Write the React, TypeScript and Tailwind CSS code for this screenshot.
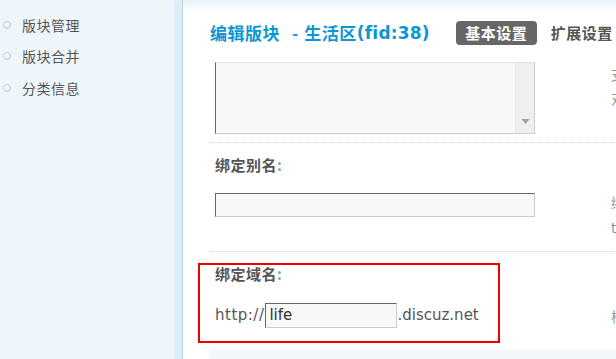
const menu = ["版块管理", "版块合并", "分类信息"];

const cjk = "font-['SimSun','Noto_Sans_CJK_SC',sans-serif]";

function Bullet() {
  return (
    <span className="h-[8px] w-[8px] shrink-0 rounded-full border border-[#c9c9c9] bg-[radial-gradient(circle_at_40%_35%,#ffffff,#e4e4e4)]" />
  );
}

export default function App() {
  return (
    <div className={`relative flex h-[359px] w-[616px] overflow-hidden bg-white ${cjk}`}>
      {/* sidebar */}
      <aside className="flex w-[174px] shrink-0 flex-col bg-[#eff6fb] pt-[9px]">
        {menu.map((item) => (
          <div key={item} className="flex h-[31.5px] items-center gap-[11px] pl-[3px]">
            <Bullet />
            <span className="text-[14px] leading-[16px] tracking-[0.5px] text-[#555]">{item}</span>
          </div>
        ))}
      </aside>
      <div className="w-[8px] shrink-0 bg-[#deedf7]" />
      <div className="w-[1px] shrink-0 bg-[#b3d2e4]" />

      {/* main */}
      <main className="flex flex-1 flex-col bg-[linear-gradient(to_bottom,#e9f2f9_0px,#ffffff_12px)] pl-[26px]">
        <div className="mt-[21px] flex h-[24px] shrink-0 items-center whitespace-nowrap">
          <h1 className="ml-[1px] flex items-center text-[17px] font-bold leading-[20px] text-[#0c96d3]">
            <span className="tracking-[0.5px]">编辑版块</span>
            <span className="ml-[12px] mr-[6px]">-</span>
            <span className="tracking-[0.5px]">生活区</span>
            <span className="font-['DejaVu_Sans',sans-serif] text-[17px] tracking-[0.2px]">(fid:38)</span>
          </h1>
          <span className="ml-[26px] flex h-[24px] w-[81px] shrink-0 items-center justify-center rounded-[4px] bg-[#666] text-[15px] font-bold tracking-[0.5px] text-white">
            基本设置
          </span>
          <span className="ml-[14px] text-[15px] font-bold tracking-[0.5px] text-[#555]">扩展设置</span>
        </div>

        {/* row: textarea */}
        <div className="mt-[17px] flex h-[81px] shrink-0 border-b border-dotted border-[#c6dbe8]">
          <div className="w-[402px] shrink-0 pl-[6px]">
            <div className="flex h-[72px] w-[320px] border border-[#ccc] border-l-[#666] border-t-[#e2e2e2] bg-[#f8f8f8]">
              <div className="flex-1" />
              <div className="flex w-[19px] flex-col justify-end border-l border-[#e6e6e6] bg-[#efefef] pb-[9px]">
                <svg viewBox="0 0 10 6" className="mx-auto h-[5px] w-[9px]">
                  <path d="M0 0h10L5 6z" fill="#a3a3a3" />
                </svg>
              </div>
            </div>
          </div>
          <div className="whitespace-nowrap text-[14px] leading-[24px] text-[#999]">
            <p>支持内置变量</p>
            <p>对应版块内容</p>
          </div>
        </div>

        {/* row: alias */}
        <div className="flex h-[109px] shrink-0 border-b border-dotted border-[#c6dbe8]">
          <div className="w-[402px] shrink-0 pl-[6px] pt-[14px]">
            <p className="text-[15px] font-bold leading-[16px] tracking-[0.5px] text-[#555]">
              绑定别名<span className="text-[#7c9bb8]">:</span>
            </p>
            <div className="mt-[20px] h-[24px] w-[320px] border border-[#ccc] border-l-[#666] border-t-[#666] bg-[#f8f8f8]" />
          </div>
          <div className="whitespace-nowrap pt-[46px] text-[14px] leading-[26px] text-[#999]">
            <p>绑定别名后</p>
            <p className="font-['DejaVu_Sans',sans-serif] text-[#8c8fa0]">to</p>
          </div>
        </div>

        {/* row: domain */}
        <div className="flex h-[97px] shrink-0">
          <div className="w-[402px] shrink-0 pl-[6px] pt-[14px]">
            <p className="text-[15px] font-bold leading-[16px] tracking-[0.5px] text-[#555]">
              绑定域名<span className="text-[#7c9bb8]">:</span>
            </p>
            <div className="mt-[21px] flex items-center font-['DejaVu_Sans',sans-serif] text-[15px] text-[#555]">
              <span className="tracking-[0.5px]">http://</span>
              <span className="ml-[1px] flex h-[25px] w-[132px] items-center border border-[#ccc] border-l-[#666] border-t-[#666] bg-[#f8f8f8] pl-[3px] text-[#333]">
                life
              </span>
              <span>.discuz.net</span>
            </div>
          </div>
          <div className="whitespace-nowrap pt-[56px] text-[14px] leading-[16px] text-[#999]">
            <p>样式</p>
          </div>
        </div>

        <div className="h-[20px] bg-[#f1f7fb]" />
      </main>

      {/* annotation frame */}
      <div className="pointer-events-none absolute left-[198px] top-[263px] h-[80px] w-[302px] border-2 border-[#ee0000]" />
    </div>
  );
}
